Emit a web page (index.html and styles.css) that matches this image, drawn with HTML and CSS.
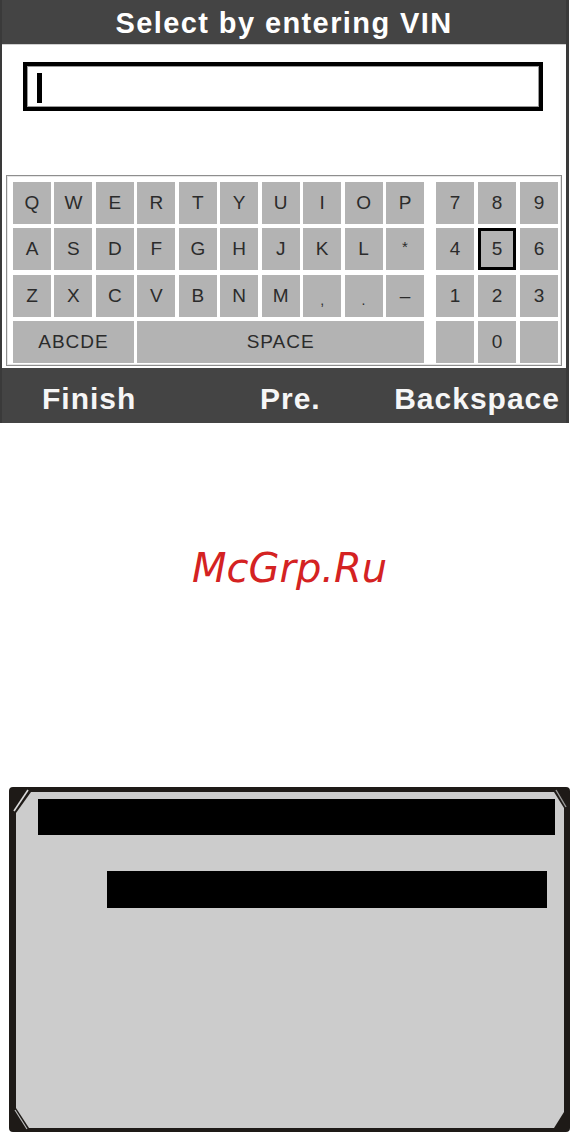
FILE: index.html
```html
<!DOCTYPE html>
<html>
<head>
<meta charset="utf-8">
<link rel="stylesheet" href="styles.css">
</head>
<body>
<div class="scr">
  <div class="title">Select by entering VIN</div>
  <div class="vin"><span class="caret"></span></div>
  <div class="kbd">
    <div class="letters">
      <div class="key">Q</div><div class="key">W</div><div class="key">E</div><div class="key">R</div><div class="key">T</div><div class="key">Y</div><div class="key">U</div><div class="key">I</div><div class="key">O</div><div class="key">P</div>
      <div class="key">A</div><div class="key">S</div><div class="key">D</div><div class="key">F</div><div class="key">G</div><div class="key">H</div><div class="key">J</div><div class="key">K</div><div class="key">L</div><div class="key sym">*</div>
      <div class="key">Z</div><div class="key">X</div><div class="key">C</div><div class="key">V</div><div class="key">B</div><div class="key">N</div><div class="key">M</div><div class="key small">,</div><div class="key small">.</div><div class="key">–</div>
      <div class="key wide3">ABCDE</div><div class="key wide7">SPACE</div>
    </div>
    <div class="nums">
      <div class="key">7</div><div class="key">8</div><div class="key">9</div>
      <div class="key">4</div><div class="key sel">5</div><div class="key">6</div>
      <div class="key">1</div><div class="key">2</div><div class="key">3</div>
      <div class="key"></div><div class="key">0</div><div class="key"></div>
    </div>
  </div>
  <div class="foot"><span class="fin">Finish</span><span class="pre">Pre.</span><span class="back">Backspace</span></div>
</div>
<div class="mark">McGrp.Ru</div>
<div class="dev2">
  <div class="lcd">
    <div class="bar1"></div>
    <div class="bar2"></div>
  </div>
  <svg class="bevel" width="548" height="336" viewBox="0 0 548 336">
    <line x1="-2" y1="19" x2="12" y2="-2" stroke="#d9d9d9" stroke-width="1.6"/>
    <line x1="540" y1="-2" x2="550" y2="15" stroke="#9a9a9a" stroke-width="1.4"/>
    <line x1="-1" y1="318" x2="11" y2="337" stroke="#bdbdbd" stroke-width="1.2"/>
  </svg>
</div>
</body>
</html>
```
FILE: styles.css
```css
html, body {
  margin: 0;
  padding: 0;
  background: #ffffff;
}
body {
  font-family: "Liberation Sans", Arial, sans-serif;
  width: 571px;
}
.scr {
  width: 569px;
  height: 423px;
  box-sizing: border-box;
  border-left: 2px solid #3a3a3a;
  border-right: 3px solid #3a3a3a;
  background: #ffffff;
  display: flex;
  flex-direction: column;
}
.title {
  height: 44px;
  border-bottom: 1px solid #d0d0d0;
  background: #444444;
  color: #ffffff;
  font-weight: bold;
  font-size: 29px;
  letter-spacing: 1.4px;
  line-height: 46px;
  text-align: center;
  overflow: hidden;
}
.vin {
  margin: 17px 0 0 21px;
  width: 520px;
  height: 49px;
  box-sizing: border-box;
  border: 4px solid #000000;
  box-shadow: inset 0 0 0 1px #9a9a9a;
  padding: 7px 0 0 10px;
}
.caret {
  display: block;
  width: 5px;
  height: 30px;
  background: #000000;
}
.kbd {
  margin: 64px 0 2px 4px;
  width: 556px;
  box-sizing: border-box;
  border: 1px solid #8e8e8e;
  box-shadow: inset 0 0 0 1px #e6e6e6;
  padding: 6px 3px 2px 6px;
  display: flex;
  gap: 12px;
  background: #ffffff;
}
.letters {
  width: 411px;
  display: grid;
  grid-template-columns: repeat(10, 1fr);
  grid-template-rows: repeat(4, 42px);
  column-gap: 3.44px;
  row-gap: 4.33px;
}
.nums {
  width: 122px;
  display: grid;
  grid-template-columns: repeat(3, 1fr);
  grid-template-rows: repeat(4, 42px);
  column-gap: 4px;
  row-gap: 4.33px;
}
.key {
  background: #b3b3b3;
  color: #2b2b2b;
  font-size: 19px;
  display: flex;
  align-items: center;
  justify-content: center;
  box-sizing: border-box;
}
.key.sym {
  font-size: 15px;
  padding-bottom: 6px;
}
.key.small {
  font-size: 14px;
  padding-top: 8px;
}
.key.wide3 {
  grid-column: span 3;
  letter-spacing: 1px;
}
.key.wide7 {
  grid-column: span 7;
  letter-spacing: 1px;
}
.key.sel {
  box-shadow: inset 0 0 0 3px #000000;
}
.foot {
  height: 55px;
  box-sizing: border-box;
  background: #444444;
  color: #f6f6f6;
  font-weight: bold;
  font-size: 30px;
  letter-spacing: 1px;
  padding: 6px 6px 0 40px;
  line-height: 49px;
  display: flex;
}
.fin {
  width: 218px;
}
.back {
  margin-left: auto;
}
.mark {
  margin-top: 125px;
  padding-left: 192px;
  height: 40px;
  line-height: 40px;
  font-family: "DejaVu Sans", sans-serif;
  font-style: oblique;
  font-size: 40px;
  color: #d42222;
}
.dev2 {
  position: relative;
  margin: 199px 0 0 9px;
  width: 561px;
  box-sizing: border-box;
  border-style: solid;
  border-color: #1e1a17;
  border-width: 5px 6px 4px 7px;
  border-radius: 4px;
  background: #1e1a17;
}
.lcd {
  width: 548px;
  height: 336px;
  box-sizing: border-box;
  background: #cccccc;
  padding-top: 7px;
  clip-path: polygon(15px 0, 538px 0, 548px 16px, 548px 320px, 538px 336px, 13px 336px, 0 316px, 0 21px);
}
.bar1 {
  margin-left: 22px;
  width: 517px;
  height: 36px;
  background: #000000;
}
.bar2 {
  margin: 36px 0 0 91px;
  width: 440px;
  height: 37px;
  background: #000000;
}
.bevel {
  position: absolute;
  left: 0;
  top: 0;
  overflow: visible;
}
```
